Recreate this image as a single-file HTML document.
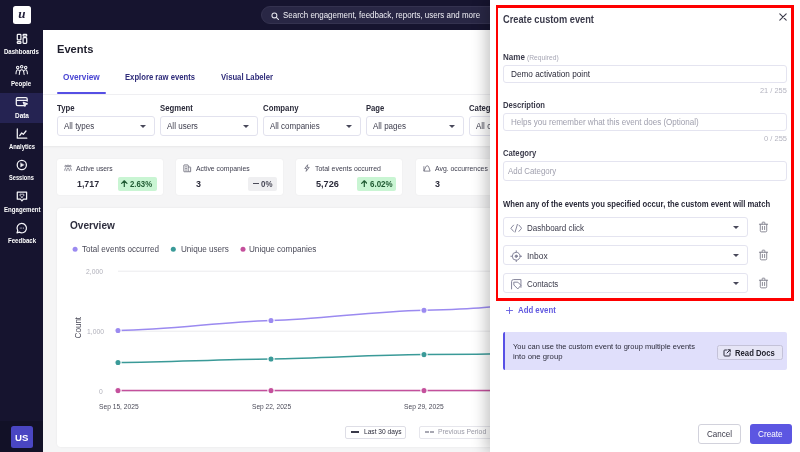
<!DOCTYPE html>
<html lang="en">
<head>
<meta charset="utf-8">
<title>Events</title>
<style>
*{box-sizing:border-box;margin:0;padding:0}
html,body{width:800px;height:452px;overflow:hidden;background:#f5f5f6;font-family:"Liberation Sans",sans-serif;color:#2b2b3a}
.a{position:absolute}
.t{position:absolute;white-space:nowrap;line-height:1;transform-origin:0 0}
#top{left:0;top:0;width:800px;height:30px;background:#16142f}
#side{left:0;top:0;width:43px;height:452px;background:#16142f}
#sidebot{left:0;top:421px;width:43px;height:31px;background:#121127}
#hdr{left:43px;top:30px;width:757px;height:65px;background:#fff;border-bottom:1px solid #f0f0f3}
#flt{left:43px;top:95px;width:757px;height:51px;background:#fff;box-shadow:0 1px 2px rgba(0,0,0,.06)}
.sel{position:absolute;top:116px;height:19.500px;width:97.500px;border:1px solid #e2e2ee;border-radius:3px;background:#fff}
.sel i{position:absolute;right:7.200px;top:7.800px;width:0;height:0;border-left:3px solid transparent;border-right:3px solid transparent;border-top:3.200px solid #48485a}
.card{position:absolute;top:159px;height:36px;width:106px;background:#fff;border-radius:3px;box-shadow:0 0 2px rgba(0,0,0,.06)}
.bd{position:absolute;top:177px;height:13.500px;border-radius:2px}
.bd.g{background:#c9f5d3}
.bd.n{background:#efeff1}
.ci{position:absolute;top:164px;width:8px;height:8px;fill:none;stroke:#6a6a78;stroke-width:.9}
#chart{left:57px;top:208px;width:760px;height:239px;background:#fff;border-radius:4px;box-shadow:0 0 2px rgba(0,0,0,.08)}
#panel{left:490px;top:0;width:310px;height:452px;background:#fff;box-shadow:-4px 0 14px rgba(0,0,0,.24)}
.inp{position:absolute;left:503px;width:283.500px;border:1px solid #e4e4f0;border-radius:3px;background:#fff}
.ev{position:absolute;left:503px;width:244.500px;height:19.700px;border:1px solid #e4e4f0;border-radius:3px;background:#fff}
.ev i{position:absolute;right:7.300px;top:7.800px;width:0;height:0;border-left:3.100px solid transparent;border-right:3.100px solid transparent;border-top:3.300px solid #48485a}
.ev svg{position:absolute;left:5.700px;top:3.700px;width:12.500px;height:12.500px;fill:none;stroke:#85859a;stroke-width:.95;stroke-linecap:round;stroke-linejoin:round}
.tr{position:absolute;left:758px;width:11px;height:12px;fill:none;stroke:#80808c;stroke-width:1;stroke-linecap:round;stroke-linejoin:round}
</style>
</head>
<body>
<div id="root" style="position:absolute;left:0;top:0;width:800px;height:452px;will-change:transform">
<div class="a" id="top"></div>
<div class="a" id="side"></div>
<div class="a" id="sidebot"></div>

<!-- logo -->
<div class="a" style="left:13px;top:6px;width:17.500px;height:17.500px;background:#fff;border-radius:2.500px"></div>
<div class="t" style="left:18.300px;top:6.600px;font-family:'Liberation Serif',serif;font-style:italic;font-weight:bold;font-size:13px;color:#24223c">u</div>

<!-- search -->
<div class="a" style="left:261px;top:5.500px;width:300px;height:18.600px;border-radius:9.300px;background:#292745;border:1px solid #34324f"></div>
<svg class="a" style="left:270.500px;top:11.500px;width:8.500px;height:8.500px" viewBox="0 0 9 9" fill="none" stroke="#e2e2ea" stroke-width="1.100"><circle cx="3.600" cy="3.600" r="2.600"/><path d="M5.600 5.600 L8.200 8.200" stroke-linecap="round"/></svg>
<div class="t" style="left:283.09px;top:11.01px;font-size:8.29px;color:#f0f0f6;transform:scaleX(0.960);">Search engagement, feedback, reports, users and more</div>

<!-- nav -->
<div class="a" style="left:0;top:93px;width:43px;height:29.500px;background:#252352"></div>
<svg class="a" style="left:0;top:0;width:44px;height:260px" viewBox="0 0 44 260" fill="none" stroke="#f4f4f8" stroke-width="1.250" stroke-linecap="round" stroke-linejoin="round">
<rect x="17.300" y="34.300" width="3.600" height="5.600" rx=".7"/><rect x="17.300" y="41.500" width="3.600" height="1.800" rx=".6"/><rect x="23.100" y="34.300" width="3.600" height="1.800" rx=".6"/><rect x="23.100" y="37.700" width="3.600" height="5.600" rx=".7"/>
<g stroke-width="1.050"><circle cx="17.700" cy="67.400" r="1.250"/><circle cx="21.700" cy="66.800" r="1.250"/><circle cx="25.700" cy="67.400" r="1.250"/><path d="M16 73.800c.1-2.700.7-4.100 1.800-4.100.8 0 1.300.5 1.600 1.200M27.400 73.800c-.1-2.700-.7-4.100-1.800-4.100-.8 0-1.300.5-1.600 1.200M19.300 74.500c.2-3.200 1-4.800 2.400-4.800s2.200 1.600 2.400 4.800"/></g>
<path d="M23.800 105.500h-6.200a1.300 1.300 0 0 1-1.300-1.300v-5.200a1.300 1.300 0 0 1 1.300-1.300h8.300a1.300 1.300 0 0 1 1.300 1.300v2M16.300 100.400h10.900M23.300 102.300l4 1.500-1.700.7-.7 1.700z"/>
<path d="M17.300 128.900v9.300h9.500M19.700 135.600l2-2.600 1.600 1.300 2.700-3.300"/>
<circle cx="21.800" cy="165" r="4.600"/><path d="M20.600 163v4l3.300-2z" fill="#f4f4f8" stroke-width=".4"/>
<path d="M17.300 192h9.300v7.200h-3.200l-1.450 1.700-1.450-1.700h-3.200z"/><path d="M21.950 197.300c-1.300-.9-2-1.600-2-2.400 0-.6.500-1 1-1 .4 0 .8.200 1 .6.200-.4.600-.6 1-.6.500 0 1 .4 1 1 0 .8-.7 1.500-2 2.400z" stroke-width=".85"/>
<path d="M21.800 223.400a4.700 4.700 0 1 1-2.400 8.750l-2.400.75.750-2.300a4.700 4.700 0 0 1 4.050-7.200z"/><path d="M20.200 228.100h.01M21.800 228.100h.01M23.400 228.100h.01" stroke-width=".9"/>
</svg>
<div class="t" style="left:4.26px;top:49.00px;font-size:6.70px;font-weight:bold;color:#fff;transform:scaleX(0.903);">Dashboards</div>
<div class="t" style="left:11.41px;top:81.00px;font-size:6.70px;font-weight:bold;color:#fff;transform:scaleX(0.918);">People</div>
<div class="t" style="left:14.86px;top:113.00px;font-size:6.70px;font-weight:bold;color:#fff;transform:scaleX(0.962);">Data</div>
<div class="t" style="left:8.66px;top:144.01px;font-size:6.70px;font-weight:bold;color:#fff;transform:scaleX(0.878);">Analytics</div>
<div class="t" style="left:9.16px;top:175.01px;font-size:6.70px;font-weight:bold;color:#fff;transform:scaleX(0.847);">Sessions</div>
<div class="t" style="left:3.56px;top:207.01px;font-size:6.70px;font-weight:bold;color:#fff;transform:scaleX(0.912);">Engagement</div>
<div class="t" style="left:7.67px;top:238.01px;font-size:6.70px;font-weight:bold;color:#fff;transform:scaleX(0.911);">Feedback</div>

<div class="a" style="left:11px;top:425.500px;width:22px;height:22px;border-radius:2.500px;background:#4a46c2"></div>
<div class="t" style="left:15.31px;top:433.01px;font-size:9.80px;font-weight:bold;color:#fff;transform:scaleX(0.983);">US</div>

<!-- header -->
<div class="a" id="hdr"></div>
<div class="t" style="left:56.53px;top:44.01px;font-size:11.37px;font-weight:bold;color:#1e1e2c;transform:scaleX(0.980);">Events</div>
<div class="t" style="left:62.65px;top:73.00px;font-size:8.99px;font-weight:bold;color:#4b47d3;transform:scaleX(0.920);">Overview</div>
<div class="t" style="left:125.08px;top:73.01px;font-size:8.36px;font-weight:bold;color:#2f2c7a;transform:scaleX(0.920);">Explore raw events</div>
<div class="t" style="left:220.83px;top:73.01px;font-size:8.37px;font-weight:bold;color:#2f2c7a;transform:scaleX(0.920);">Visual Labeler</div>
<div class="a" style="left:57px;top:92px;width:48.500px;height:2.200px;border-radius:1px;background:#564fe4"></div>

<!-- filters -->
<div class="a" id="flt"></div>
<div class="t" style="left:56.83px;top:104.00px;font-size:8.46px;font-weight:bold;color:#2b2b3a;transform:scaleX(0.920);">Type</div>
<div class="t" style="left:159.58px;top:104.01px;font-size:8.45px;font-weight:bold;color:#2b2b3a;transform:scaleX(0.920);">Segment</div>
<div class="t" style="left:262.58px;top:104.00px;font-size:8.49px;font-weight:bold;color:#2b2b3a;transform:scaleX(0.920);">Company</div>
<div class="t" style="left:365.83px;top:104.01px;font-size:8.34px;font-weight:bold;color:#2b2b3a;transform:scaleX(0.920);">Page</div>
<div class="t" style="left:468.83px;top:104.00px;font-size:8.42px;font-weight:bold;color:#2b2b3a;transform:scaleX(0.920);">Category</div>
<div class="sel" style="left:57px"><i></i></div>
<div class="sel" style="left:160px"><i></i></div>
<div class="sel" style="left:263px"><i></i></div>
<div class="sel" style="left:366px"><i></i></div>
<div class="sel" style="left:469px"><i></i></div>
<div class="t" style="left:63.58px;top:122.01px;font-size:8.36px;color:#3c3c4c;transform:scaleX(0.960);">All types</div>
<div class="t" style="left:166.58px;top:122.01px;font-size:8.38px;color:#3c3c4c;transform:scaleX(0.960);">All users</div>
<div class="t" style="left:270.08px;top:122.01px;font-size:8.34px;color:#3c3c4c;transform:scaleX(0.960);">All companies</div>
<div class="t" style="left:373.08px;top:122.01px;font-size:8.36px;color:#3c3c4c;transform:scaleX(0.960);">All pages</div>
<div class="t" style="left:476.08px;top:122.01px;font-size:8.36px;color:#3c3c4c;transform:scaleX(0.960);">All categories</div>

<!-- stat cards -->
<div class="card" style="left:57px"></div>
<div class="card" style="left:176.300px;width:106.700px"></div>
<div class="card" style="left:296.300px"></div>
<div class="card" style="left:415.800px"></div>
<svg class="ci" style="left:63.500px" viewBox="0 0 9 9"><circle cx="2" cy="2.500" r="1"/><circle cx="4.500" cy="2.200" r="1"/><circle cx="7" cy="2.500" r="1"/><path d="M.8 7.500c.2-2 .6-2.800 1.400-2.800M8.200 7.500c-.2-2-.6-2.800-1.400-2.800M3 8c.2-2.300.7-3.300 1.500-3.300S5.800 5.700 6 8"/></svg>
<svg class="ci" style="left:183px;width:8.500px;height:8.500px" viewBox="0 0 9 9"><rect x=".9" y="1" width="4.600" height="7.200" rx=".4"/><path d="M5.500 3.200h2.200a.4.400 0 0 1 .4.400V8.200H5.500M2.300 3h1.800M2.300 4.700h1.800M2.300 6.400h1.800M6.800 5v.1M6.800 6.600v.1"/></svg>
<svg class="ci" style="left:303px" viewBox="0 0 9 9"><path d="M5.300.8L2 5h2.300L3.500 8.300 7 3.800H4.600z"/></svg>
<svg class="ci" style="left:422.500px" viewBox="0 0 9 9"><path d="M1 8h7L6.500 3.500C6 1.500 3.500 1.500 3 3.500zM1 8V2.500"/></svg>
<div class="t" style="left:75.90px;top:165.01px;font-size:7.02px;color:#3c3c4c;transform:scaleX(0.960);">Active users</div>
<div class="t" style="left:195.64px;top:166.00px;font-size:7.14px;color:#3c3c4c;transform:scaleX(0.960);">Active companies</div>
<div class="t" style="left:315.39px;top:165.00px;font-size:7.23px;color:#3c3c4c;transform:scaleX(0.960);">Total events occurred</div>
<div class="t" style="left:434.64px;top:166.01px;font-size:7.15px;color:#3c3c4c;transform:scaleX(0.960);">Avg. occurrences per user</div>
<div class="t" style="left:77.03px;top:179.01px;font-size:9.40px;font-weight:bold;color:#2b2b3a;transform:scaleX(0.943);">1,717</div>
<div class="t" style="left:195.83px;top:179.01px;font-size:9.40px;font-weight:bold;color:#2b2b3a;transform:scaleX(0.950);">3</div>
<div class="t" style="left:315.83px;top:179.01px;font-size:9.40px;font-weight:bold;color:#2b2b3a;transform:scaleX(0.975);">5,726</div>
<div class="t" style="left:434.83px;top:179.01px;font-size:9.40px;font-weight:bold;color:#2b2b3a;transform:scaleX(0.950);">3</div>
<div class="bd g" style="left:117.500px;width:39px"></div>
<div class="bd n" style="left:248px;width:28.500px"></div>
<div class="bd g" style="left:357px;width:39px"></div>
<svg class="a" style="left:121.300px;top:179.800px;width:6.600px;height:7.700px" viewBox="0 0 6 7" fill="none" stroke="#1f5a32" stroke-width="1.100" stroke-linecap="round" stroke-linejoin="round"><path d="M3 6.400V.8M.6 3.100L3 .7 5.400 3.100"/></svg>
<div class="t" style="left:130.08px;top:180.00px;font-size:8.47px;font-weight:bold;color:#1f5a32;transform:scaleX(0.920);">2.63%</div>
<div class="a" style="left:253px;top:183.300px;width:5.800px;height:1px;background:#4a4a58"></div>
<div class="t" style="left:260.87px;top:180.00px;font-size:8.62px;font-weight:bold;color:#4a4a58;transform:scaleX(0.920);">0%</div>
<svg class="a" style="left:360.800px;top:179.800px;width:6.600px;height:7.700px" viewBox="0 0 6 7" fill="none" stroke="#1f5a32" stroke-width="1.100" stroke-linecap="round" stroke-linejoin="round"><path d="M3 6.400V.8M.6 3.100L3 .7 5.400 3.100"/></svg>
<div class="t" style="left:369.57px;top:180.01px;font-size:8.67px;font-weight:bold;color:#1f5a32;transform:scaleX(0.920);">6.02%</div>

<!-- chart card -->
<div class="a" id="chart"></div>
<div class="t" style="left:69.67px;top:220.01px;font-size:10.70px;font-weight:bold;color:#2e2e3e;transform:scaleX(0.943);">Overview</div>
<svg class="a" style="left:57px;top:208px;width:743px;height:239px" viewBox="57 208 743 239">
  <circle cx="75.100" cy="249.300" r="2.500" fill="#9b8af0"/>
  <circle cx="173.300" cy="249.300" r="2.500" fill="#3a9a98"/>
  <circle cx="243" cy="249.300" r="2.500" fill="#c4509c"/>
  <path d="M118 271.200H800M118 331.200H800M118 391.200H800" stroke="#ebebee" stroke-width="1"/>
  <path d="M118 330.500C170 330 220 322 271 320.500S370 311.500 424 310.200S470 308.500 500 306" fill="none" stroke="#9b8af0" stroke-width="1.500"/>
  <path d="M118 362.500C170 362 220 359.500 271 359S370 355 424 354.600S470 354.200 500 353.800" fill="none" stroke="#3a9a98" stroke-width="1.500"/>
  <path d="M118 390.600H500" stroke="#c4509c" stroke-width="1.500"/>
  <g stroke="#fff" stroke-width="1.100">
  <circle cx="118" cy="330.500" r="3.100" fill="#9b8af0"/><circle cx="271" cy="320.500" r="3.100" fill="#9b8af0"/><circle cx="424" cy="310.200" r="3.100" fill="#9b8af0"/>
  <circle cx="118" cy="362.500" r="3.100" fill="#3a9a98"/><circle cx="271" cy="359" r="3.100" fill="#3a9a98"/><circle cx="424" cy="354.600" r="3.100" fill="#3a9a98"/>
  <circle cx="118" cy="390.600" r="3.100" fill="#c4509c"/><circle cx="271" cy="390.600" r="3.100" fill="#c4509c"/><circle cx="424" cy="390.600" r="3.100" fill="#c4509c"/>
  </g>
</svg>
<div class="t" style="left:82.08px;top:245.00px;font-size:8.45px;color:#4a4a58;transform:scaleX(0.960);">Total events occurred</div>
<div class="t" style="left:180.58px;top:245.01px;font-size:8.46px;color:#4a4a58;transform:scaleX(0.960);">Unique users</div>
<div class="t" style="left:249.08px;top:245.01px;font-size:8.47px;color:#4a4a58;transform:scaleX(0.960);">Unique companies</div>
<div class="t" style="left:86.40px;top:268.00px;font-size:7.06px;color:#b0b0ba;transform:scaleX(0.960);">2,000</div>
<div class="t" style="left:86.65px;top:328.00px;font-size:7.06px;color:#b0b0ba;transform:scaleX(0.960);">1,000</div>
<div class="t" style="left:99.25px;top:388.01px;font-size:7.06px;color:#b0b0ba;transform:scaleX(0.960);">0</div>
<div class="a" style="left:78.500px;top:327.750px;width:0;height:0"><div class="a" style="left:0;top:0;transform:rotate(-90deg);transform-origin:0 0"><div class="t" style="left:-11.350px;top:-4.600px;font-size:8.500px;color:#4a4a58;transform:scaleX(.95);transform-origin:50% 50%">Count</div></div></div>
<div class="t" style="left:98.65px;top:404.01px;font-size:6.95px;color:#4a4a58;transform:scaleX(0.960);">Sep 15, 2025</div>
<div class="t" style="left:251.66px;top:404.01px;font-size:6.86px;color:#4a4a58;transform:scaleX(0.960);">Sep 22, 2025</div>
<div class="t" style="left:404.15px;top:404.01px;font-size:6.95px;color:#4a4a58;transform:scaleX(0.960);">Sep 29, 2025</div>
<div class="a" style="left:345px;top:425.500px;width:60.500px;height:13px;border:1px solid #dedee6;border-radius:2px;background:#fff"></div>
<div class="a" style="left:351px;top:431.300px;width:8px;height:1.500px;background:#3a3a4a"></div>
<div class="t" style="left:363.65px;top:429.01px;font-size:6.92px;color:#2b2b3a;transform:scaleX(0.960);">Last 30 days</div>
<div class="a" style="left:419px;top:425.500px;width:80px;height:13px;border:1px solid #e6e6ec;border-radius:2px;background:#fff"></div>
<div class="a" style="left:425px;top:431.300px;width:3.500px;height:1.500px;background:#a8a8b2"></div>
<div class="a" style="left:430px;top:431.300px;width:3.500px;height:1.500px;background:#a8a8b2"></div>
<div class="t" style="left:437.64px;top:429.00px;font-size:7.11px;color:#9a9aa6;transform:scaleX(0.960);">Previous Period</div>

<!-- panel -->
<div class="a" id="panel"></div>
<div class="t" style="left:502.80px;top:15.01px;font-size:10.06px;font-weight:bold;color:#3a3a4a;transform:scaleX(0.920);">Create custom event</div>
<svg class="a" style="left:779.200px;top:12.600px;width:8px;height:8px" viewBox="0 0 9 9" stroke="#3a3a4a" stroke-width="1.250" stroke-linecap="round"><path d="M.9 .9l7.200 7.200M8.100 .9l-7.200 7.200"/></svg>

<div class="t" style="left:502.86px;top:53.00px;font-size:8.73px;font-weight:bold;color:#3a3a4a;transform:scaleX(0.920);">Name</div>
<div class="t" style="left:527.15px;top:54.01px;font-size:6.99px;color:#a6a6b4;transform:scaleX(0.960);">(Required)</div>
<div class="inp" style="top:65px;height:17.500px"></div>
<div class="t" style="left:511.32px;top:70.00px;font-size:8.57px;color:#2b2b3a;transform:scaleX(0.960);">Demo activation point</div>
<div class="t" style="left:760.11px;top:87.01px;font-size:7.72px;color:#b4b4c0;transform:scaleX(0.960);">21 / 255</div>

<div class="t" style="left:502.88px;top:101.00px;font-size:8.30px;font-weight:bold;color:#3a3a4a;transform:scaleX(0.920);">Description</div>
<div class="inp" style="top:113px;height:18px"></div>
<div class="t" style="left:511.33px;top:118.01px;font-size:8.39px;color:#a0a0ae;transform:scaleX(0.960);">Helps you remember what this event does (Optional)</div>
<div class="t" style="left:763.86px;top:135.01px;font-size:7.85px;color:#b4b4c0;transform:scaleX(0.960);">0 / 255</div>

<div class="t" style="left:502.88px;top:149.00px;font-size:8.36px;font-weight:bold;color:#3a3a4a;transform:scaleX(0.920);">Category</div>
<div class="inp" style="top:161px;height:19.500px"></div>
<div class="t" style="left:507.59px;top:168.00px;font-size:8.23px;color:#a0a0ae;transform:scaleX(0.960);">Add Category</div>

<div class="t" style="left:502.88px;top:200.01px;font-size:8.40px;font-weight:bold;color:#2b2b3a;transform:scaleX(0.920);">When any of the events you specified occur, the custom event will match</div>

<div class="ev" style="top:217.200px"><svg viewBox="0 0 12 12"><path d="M3.400 3L.8 6l2.600 3M8.600 3l2.600 3-2.600 3M7.100 2.300l-2.200 7.400"/></svg><i></i></div>
<div class="ev" style="top:245.200px"><svg viewBox="0 0 12 12"><circle cx="6" cy="6" r="3.800"/><circle cx="6" cy="6" r="1.100" fill="#85859a"/><path d="M6 .8v1.400M6 9.800v1.400M.8 6h1.400M9.800 6h1.400"/></svg><i></i></div>
<div class="ev" style="top:273.100px"><svg viewBox="0 0 12 12"><path d="M1.500 10.500v-7a2 2 0 0 1 2-2h7v7.500"/><path d="M4 4h3.500l3 3-3 3.500-3.500-3.500z"/></svg><i></i></div>
<div class="t" style="left:526.58px;top:224.01px;font-size:8.36px;color:#3a3a4a;transform:scaleX(0.960);">Dashboard click</div>
<div class="t" style="left:526.56px;top:252.01px;font-size:8.78px;color:#3a3a4a;transform:scaleX(0.960);">Inbox</div>
<div class="t" style="left:526.59px;top:281.01px;font-size:8.27px;color:#3a3a4a;transform:scaleX(0.960);">Contacts</div>
<svg class="tr" style="top:220.800px" viewBox="0 0 12 13"><path d="M1.500 3.500h9M4.500 3.500V2a.8.800 0 0 1 .8-.8h1.400a.8.800 0 0 1 .8.800v1.500M2.500 3.500v7a1.300 1.300 0 0 0 1.300 1.300h4.400a1.300 1.300 0 0 0 1.300-1.300v-7M4.800 5.800v3.500M7.200 5.800v3.500"/></svg>
<svg class="tr" style="top:248.800px" viewBox="0 0 12 13"><path d="M1.500 3.500h9M4.500 3.500V2a.8.800 0 0 1 .8-.8h1.400a.8.800 0 0 1 .8.800v1.500M2.500 3.500v7a1.300 1.300 0 0 0 1.300 1.300h4.400a1.300 1.300 0 0 0 1.300-1.300v-7M4.800 5.800v3.500M7.200 5.800v3.500"/></svg>
<svg class="tr" style="top:276.800px" viewBox="0 0 12 13"><path d="M1.500 3.500h9M4.500 3.500V2a.8.800 0 0 1 .8-.8h1.400a.8.800 0 0 1 .8.800v1.500M2.500 3.500v7a1.300 1.300 0 0 0 1.300 1.300h4.400a1.300 1.300 0 0 0 1.300-1.300v-7M4.800 5.800v3.500M7.200 5.800v3.500"/></svg>

<div class="a" style="left:495.500px;top:4.600px;width:2.850px;height:296.700px;background:#fe0000"></div>
<div class="a" style="left:791px;top:4.600px;width:3px;height:296.700px;background:#fe0000"></div>
<div class="a" style="left:495.500px;top:4.600px;width:298.500px;height:3px;background:#fe0000"></div>
<div class="a" style="left:495.500px;top:298.100px;width:298.500px;height:3.200px;background:#fe0000"></div>

<svg class="a" style="left:506px;top:307px;width:7px;height:7px" viewBox="0 0 8 8" stroke="#625ae0" stroke-width="1" stroke-linecap="round"><path d="M4 .5v7M.5 4h7"/></svg>
<div class="t" style="left:517.57px;top:306.00px;font-size:8.51px;font-weight:bold;color:#625ae0;transform:scaleX(0.920);">Add event</div>

<div class="a" style="left:503px;top:332px;width:284px;height:38px;background:#e0dffb;border-left:2px solid #5850e6;border-radius:2px"></div>
<div class="t" style="left:513.36px;top:343.01px;font-size:7.82px;color:#2b2b3a;transform:scaleX(0.960);">You can use the custom event to group multiple events</div>
<div class="t" style="left:513.35px;top:353.01px;font-size:8.07px;color:#2b2b3a;transform:scaleX(0.960);">into one group</div>
<div class="a" style="left:717px;top:345.200px;width:66px;height:14.800px;border:1px solid #c4c2d8;border-radius:2.500px;background:#e6e5f6"></div>
<svg class="a" style="left:723px;top:348.500px;width:8px;height:8px" viewBox="0 0 8 8" fill="none" stroke="#2b2b3a" stroke-width="1" stroke-linecap="round" stroke-linejoin="round"><path d="M3.500 1H1.800A.8.800 0 0 0 1 1.800v4.400a.8.800 0 0 0 .8.800h4.400a.8.800 0 0 0 .8-.8V4.500M5 .8h2.200V3M7 1L4 4"/></svg>
<div class="t" style="left:735.38px;top:349.00px;font-size:8.38px;font-weight:bold;color:#22222e;transform:scaleX(0.920);">Read Docs</div>

<div class="a" style="left:698px;top:424px;width:43px;height:19.500px;border:1px solid #d2d2dc;border-radius:3px;background:#fff"></div>
<div class="t" style="left:706.78px;top:430.00px;font-size:8.38px;color:#3a3a4a;transform:scaleX(0.960);">Cancel</div>
<div class="a" style="left:750px;top:424px;width:41.500px;height:19.500px;border-radius:3px;background:#5c56e2"></div>
<div class="t" style="left:758.27px;top:430.00px;font-size:8.56px;color:#fff;transform:scaleX(0.960);">Create</div>
</div>
</body>
</html>
